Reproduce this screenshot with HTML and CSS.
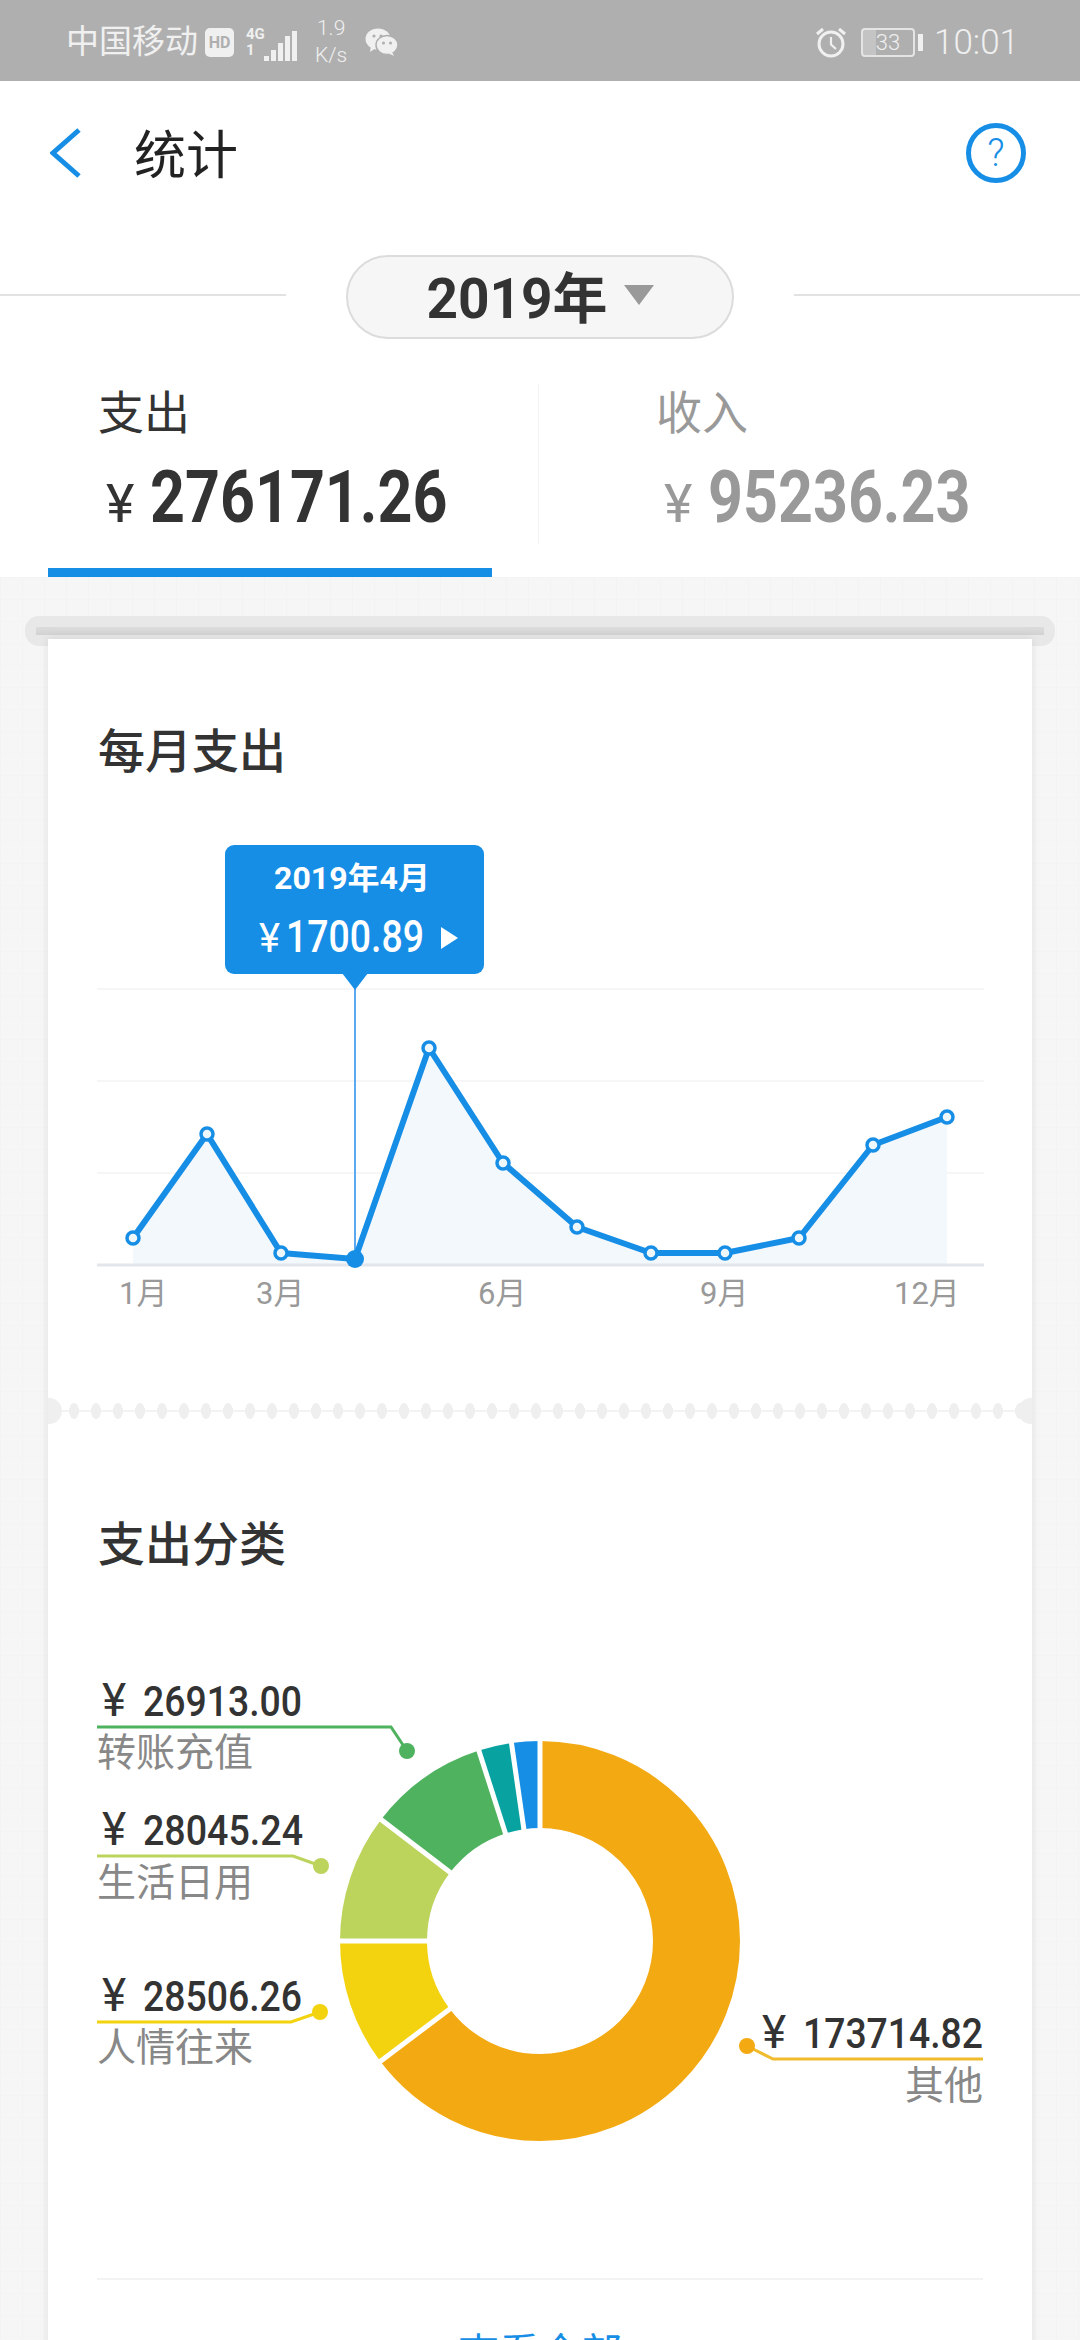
FILE: index.html
```html
<!DOCTYPE html>
<html lang="zh-CN">
<head>
  <meta charset="UTF-8">
  <meta name="viewport" content="width=device-width, initial-scale=1.0">
  <title>统计</title>
  <link rel="stylesheet" href="styles.css">
</head>
<body>

  <!-- Status bar -->
  <div class="status-bar">
    <div class="status-left">
      <span class="carrier">中国移动</span>
      <span class="hd">HD</span>
      <span class="net"><b>4G</b><b>1</b></span>
      <svg class="signal" width="33" height="32" viewBox="0 0 33 32">
        <rect x="0" y="26" width="5" height="5" fill="#f0f0f0"/>
        <rect x="7" y="20" width="5" height="11" fill="#f0f0f0"/>
        <rect x="14" y="13" width="5" height="18" fill="#f0f0f0"/>
        <rect x="21" y="6" width="5" height="25" fill="#f0f0f0"/>
        <rect x="28" y="1" width="5" height="30" fill="#f0f0f0"/>
      </svg>
      <span class="speed"><span>1.9</span><span>K/s</span></span>
      <svg class="wechat" width="33" height="28" viewBox="0 0 33 28">
        <ellipse cx="13" cy="11" rx="12.5" ry="10.5" fill="#f0f0f0"/>
        <path d="M6 18 L5 24 L11 20 Z" fill="#f0f0f0"/>
        <ellipse cx="22" cy="17" rx="11" ry="9.5" fill="#f0f0f0" stroke="#afafaf" stroke-width="1.5"/>
        <path d="M27 24 L29 28 L23 25 Z" fill="#f0f0f0"/>
        <circle cx="9" cy="8" r="1.6" fill="#afafaf"/>
        <circle cx="16" cy="8" r="1.6" fill="#afafaf"/>
        <circle cx="18.5" cy="15" r="1.5" fill="#afafaf"/>
        <circle cx="25.5" cy="15" r="1.5" fill="#afafaf"/>
      </svg>
    </div>
    <div class="status-right">
      <svg class="alarm" width="32" height="31" viewBox="0 0 32 31">
        <circle cx="16" cy="17" r="12" fill="none" stroke="#f0f0f0" stroke-width="3"/>
        <path d="M16 10 V17.5 L21 22" fill="none" stroke="#f0f0f0" stroke-width="2.2"/>
        <path d="M2 7 L8 2 M30 7 L24 2" fill="none" stroke="#f0f0f0" stroke-width="3"/>
      </svg>
      <span class="battery"><span class="battery-body">33</span><span class="battery-nub"></span></span>
      <span class="time">10:01</span>
    </div>
  </div>

  <!-- Title row -->
  <div class="nav">
    <svg class="back" width="32" height="50" viewBox="0 0 32 50">
      <path d="M29 2 L3 25 L29 48" fill="none" stroke="#178ee6" stroke-width="5"/>
    </svg>
    <h1>统计</h1>
    <span class="help">?</span>
  </div>

  <div class="year-row">
    <span class="year-line"></span>
    <div class="year-pill">
      <span class="year-text">2019年</span>
      <span class="caret"></span>
    </div>
    <span class="year-line"></span>
  </div>

  <!-- Expense / income -->
  <div class="tabs">
    <div class="tab active">
      <div class="tab-label">支出</div>
      <div class="tab-amount"><span class="yen">¥</span><span class="num">276171.26</span></div>
    </div>
    <div class="tab-divider"></div>
    <div class="tab income">
      <div class="tab-label">收入</div>
      <div class="tab-amount"><span class="yen">¥</span><span class="num">95236.23</span></div>
    </div>
  </div>

  <div class="board">
    <div class="slot"><div class="slot-inner"></div></div>

    <div class="card">
      <section class="monthly">
        <h2>每月支出</h2>
        <svg class="chart" width="984" height="567" viewBox="48 830 984 567">
          <g class="grid">
            <line x1="97" y1="988" x2="984" y2="988"/>
            <line x1="97" y1="1080" x2="984" y2="1080"/>
            <line x1="97" y1="1172" x2="984" y2="1172"/>
          </g>
          <polygon class="area" points="133,1237 207,1133 281,1252 355,1258 429,1047 503,1162 577,1226 651,1252 725,1252 799,1237 873,1144 947,1116 947,1263 133,1263"/>
          <line class="axis" x1="97" y1="1264" x2="984" y2="1264"/>
          <line class="cursor" x1="355" y1="975" x2="355" y2="1258"/>
          <polyline class="trend" points="133,1237 207,1133 281,1252 355,1258 429,1047 503,1162 577,1226 651,1252 725,1252 799,1237 873,1144 947,1116"/>
          <g class="points">
            <circle cx="133" cy="1237" r="6"/>
            <circle cx="207" cy="1133" r="6"/>
            <circle cx="281" cy="1252" r="6"/>
            <circle cx="429" cy="1047" r="6"/>
            <circle cx="503" cy="1162" r="6"/>
            <circle cx="577" cy="1226" r="6"/>
            <circle cx="651" cy="1252" r="6"/>
            <circle cx="725" cy="1252" r="6"/>
            <circle cx="799" cy="1237" r="6"/>
            <circle cx="873" cy="1144" r="6"/>
            <circle cx="947" cy="1116" r="6"/>
          </g>
          <circle cx="355" cy="1258" r="9" fill="#178ee6"/>
          <g class="months">
            <text x="119" y="1303">1月</text>
            <text x="256" y="1303">3月</text>
            <text x="478" y="1303">6月</text>
            <text x="700" y="1303">9月</text>
            <text x="894" y="1303">12月</text>
          </g>
          <rect x="225" y="844" width="259" height="129" rx="9" fill="#178ee6"/>
          <path d="M342 972 H368 L355 989 Z" fill="#178ee6"/>
          <text class="tip-date" x="274" y="888" textLength="156" lengthAdjust="spacingAndGlyphs">2019年4月</text>
          <text class="tip-yen" x="259" y="951">¥</text>
          <text class="tip-num" x="286" y="951" textLength="138" lengthAdjust="spacingAndGlyphs">1700.89</text>
          <path d="M441 926 L458 937 L441 948 Z" fill="#fff"/>
        </svg>
      </section>

      <div class="perforation"></div>

      <section class="category">
        <h2>支出分类</h2>
        <svg class="chart" width="984" height="617" viewBox="48 1660 984 617">
          <g class="donut" transform="translate(540 1940)">
            <circle r="156.5" stroke="#f3a912" stroke-dasharray="233 360" transform="rotate(-90)" pathLength="360"/>
            <circle r="156.5" stroke="#f3d30f" stroke-dasharray="37 360" transform="rotate(143)" pathLength="360"/>
            <circle r="156.5" stroke="#bcd35c" stroke-dasharray="37.4 360" transform="rotate(180)" pathLength="360"/>
            <circle r="156.5" stroke="#4fb25f" stroke-dasharray="34.8 360" transform="rotate(217.4)" pathLength="360"/>
            <circle r="156.5" stroke="#08a3a0" stroke-dasharray="9.6 360" transform="rotate(252.2)" pathLength="360"/>
            <circle r="156.5" stroke="#178ee6" stroke-dasharray="8.2 360" transform="rotate(261.8)" pathLength="360"/>
            <g class="gaps">
              <line y1="-110" y2="-203"/>
              <line y1="-110" y2="-203" transform="rotate(233)"/>
              <line y1="-110" y2="-203" transform="rotate(270)"/>
              <line y1="-110" y2="-203" transform="rotate(307.4)"/>
              <line y1="-110" y2="-203" transform="rotate(342.2)"/>
              <line y1="-110" y2="-203" transform="rotate(351.8)"/>
            </g>
          </g>

          <text class="pie-yen" x="102" y="1715">¥</text>
          <text class="pie-num" x="143" y="1715" textLength="159" lengthAdjust="spacingAndGlyphs">26913.00</text>
          <polyline class="lead" stroke="#4fb25f" points="97,1726 391,1726 407,1750"/>
          <circle cx="407" cy="1750" r="8" fill="#4fb25f"/>
          <text class="pie-name" x="97" y="1765">转账充值</text>

          <text class="pie-yen" x="102" y="1844">¥</text>
          <text class="pie-num" x="143" y="1844" textLength="160" lengthAdjust="spacingAndGlyphs">28045.24</text>
          <polyline class="lead" stroke="#bcd35c" points="97,1855 293,1855 321,1865"/>
          <circle cx="321" cy="1865" r="8" fill="#bcd35c"/>
          <text class="pie-name" x="97" y="1895">生活日用</text>

          <text class="pie-yen" x="102" y="2010">¥</text>
          <text class="pie-num" x="143" y="2010" textLength="159" lengthAdjust="spacingAndGlyphs">28506.26</text>
          <polyline class="lead" stroke="#f3d30f" points="97,2021 291,2021 320,2011"/>
          <circle cx="320" cy="2011" r="8" fill="#f3d30f"/>
          <text class="pie-name" x="97" y="2060">人情往来</text>

          <text class="pie-yen" x="762" y="2047">¥</text>
          <text class="pie-num" x="803" y="2047" textLength="180" lengthAdjust="spacingAndGlyphs">173714.82</text>
          <polyline class="lead" stroke="#f0bb2c" points="983,2058 773,2058 747,2045"/>
          <circle cx="747" cy="2045" r="8" fill="#f3a912"/>
          <text class="pie-name" x="983" y="2098" text-anchor="end">其他</text>
        </svg>
        <div class="see-all">查看全部</div>
      </section>
    </div>
  </div>

</body>
</html>
```

FILE: styles.css
```css
html, body {
  margin: 0;
  height: 2340px;
  overflow: hidden;
  background-color: #fff;
  font-family: Roboto, "Noto Sans CJK SC", sans-serif;
}
h1, h2 {
  margin: 0;
  font-weight: 400;
}

/* status bar */
.status-bar {
  height: 81px;
  background-color: #afafaf;
  color: #f0f0f0;
  display: flex;
  justify-content: space-between;
  align-items: center;
  padding: 3px 61px 0 66px;
  box-sizing: border-box;
}
.status-left, .status-right {
  display: flex;
  align-items: center;
}
.carrier {
  font-size: 33px;
  line-height: 40px;
}
.hd {
  width: 29px;
  height: 29px;
  margin-left: 7px;
  border-radius: 5px;
  background-color: #f0f0f0;
  color: #afafaf;
  font-size: 16px;
  font-weight: 700;
  line-height: 29px;
  text-align: center;
}
.net {
  display: flex;
  flex-direction: column;
  margin-left: 12px;
  width: 18px;
  font-size: 15px;
  line-height: 16px;
}
.signal {
  margin-top: 8px;
}
.speed {
  display: flex;
  flex-direction: column;
  align-items: center;
  margin-left: 18px;
  font-size: 21px;
  line-height: 27px;
  font-weight: 300;
}
.wechat {
  margin-left: 18px;
}
.alarm {
  margin-right: 14px;
}
.battery {
  display: flex;
  align-items: center;
}
.battery-body {
  width: 50px;
  height: 25px;
  border: 2px solid #e4e4e4;
  border-radius: 4px;
  background: linear-gradient(to right, #c4c4c4 26%, transparent 26%);
  font-size: 22px;
  line-height: 25px;
  text-align: center;
  font-weight: 300;
}
.battery-nub {
  width: 5px;
  height: 17px;
  margin-left: 3px;
  background-color: #f0f0f0;
}
.time {
  margin-left: 11px;
  font-size: 35px;
  font-weight: 300;
}

/* title row */
.nav {
  height: 144px;
  display: flex;
  align-items: center;
  padding: 0 54px 0 50px;
}
.nav h1 {
  margin-left: 52px;
  margin-bottom: 4px;
  font-size: 52px;
  color: #222;
  flex: 1;
}
.help {
  width: 50px;
  height: 50px;
  border: 5px solid #178ee6;
  border-radius: 50%;
  color: #178ee6;
  font-size: 38px;
  font-weight: 300;
  line-height: 50px;
  text-align: center;
}

/* year picker */
.year-row {
  margin-top: 30px;
  display: flex;
  align-items: center;
  gap: 60px;
}
.year-line {
  flex: 1;
  height: 2px;
  margin-bottom: 4px;
  background-color: #e2e2e2;
}
.year-pill {
  box-sizing: border-box;
  width: 388px;
  height: 84px;
  border: 2px solid #dcdcdc;
  border-radius: 42px;
  background-color: #f6f6f6;
  display: flex;
  justify-content: center;
  align-items: center;
  gap: 16px;
  color: #333;
  font-size: 55px;
  font-weight: 700;
}
.year-text {
  margin-bottom: 6px;
}
.caret {
  width: 0;
  height: 0;
  margin-bottom: 4px;
  border-left: 15px solid transparent;
  border-right: 15px solid transparent;
  border-top: 20px solid #999;
}

/* expense / income */
.tabs {
  box-sizing: border-box;
  height: 238px;
  display: flex;
}
.tab {
  box-sizing: border-box;
  padding-top: 48px;
  color: #999;
}
.tab.active {
  flex: none;
  width: 444px;
  margin: 0 46px 0 48px;
  padding-left: 50px;
  border-bottom: 9px solid #178ee6;
  color: #333;
}
.tab.income {
  padding-left: 117px;
}
.tab-divider {
  width: 1px;
  height: 160px;
  margin-top: 45px;
  background-color: #f3f3f3;
}
.tab-label {
  font-size: 46px;
  line-height: 52px;
}
.tab-amount {
  display: flex;
  align-items: baseline;
  margin-top: 18px;
  margin-left: 8px;
  line-height: 80px;
}
.yen {
  flex: none;
  font-size: 54px;
  width: 44px;
}
.num {
  flex: none;
  display: inline-block;
  font-size: 73px;
  font-weight: 700;
  transform: scaleX(0.835);
  transform-origin: left center;
}

/* receipt board */
.board {
  height: 1764px;
  padding-top: 39px;
  box-sizing: border-box;
  background-color: #f6f6f6;
  background-image:
    linear-gradient(to right, #f3f3f3 1px, transparent 1px),
    linear-gradient(to bottom, #f4f4f4 1px, transparent 1px);
  background-size: 22px 22px;
}
.slot {
  height: 30px;
  margin: 0 25px;
  padding-top: 11px;
  box-sizing: border-box;
  border-radius: 14px;
  background-color: #e8e8e8;
}
.slot-inner {
  height: 8px;
  margin: 0 11px;
  background: linear-gradient(#dcdcdc, #d2d2d2);
}
.card {
  margin: -7px 48px 0;
  background-color: #fff;
  box-shadow: 0 0 9px rgba(0, 0, 0, 0.09);
  position: relative;
}
.card h2 {
  margin-left: 50px;
  font-size: 47px;
  font-weight: 500;
  line-height: 47px;
  color: #333;
}
.chart {
  display: block;
}
.monthly {
  padding-top: 89px;
}
.monthly .chart {
  margin-top: 56px;
}
.category {
  padding-top: 97px;
}
.category .chart {
  margin-top: 93px;
}

/* line chart */
.grid line {
  stroke: #f6f6f6;
  stroke-width: 2;
}
.area {
  fill: #f3f8fd;
}
.axis {
  stroke: #e3e6ea;
  stroke-width: 3;
}
.cursor {
  stroke: #5aa8f0;
  stroke-width: 2;
}
.trend {
  fill: none;
  stroke: #178ee6;
  stroke-width: 6;
  stroke-linejoin: round;
}
.points circle {
  fill: #eef7fc;
  stroke: #178ee6;
  stroke-width: 3.5;
}
.months text {
  font-size: 31px;
  fill: #999;
}
.tip-date {
  font-size: 31px;
  font-weight: 700;
  fill: #fff;
}
.tip-yen {
  font-size: 40px;
  fill: #fff;
}
.tip-num {
  font-size: 45px;
  font-weight: 500;
  fill: #fff;
}

/* perforated tear line */
.perforation {
  height: 26px;
  position: relative;
  background:
    radial-gradient(ellipse 5px 8px at center, #efefef 96%, transparent) 15px 0 / 22px 26px repeat-x,
    linear-gradient(#f3f3f3, #f3f3f3) 0 12px / 100% 2px no-repeat;
}
.perforation::before,
.perforation::after {
  content: "";
  position: absolute;
  top: 0;
  width: 14px;
  height: 26px;
  background-color: #efefef;
}
.perforation::before {
  left: 0;
  border-radius: 0 13px 13px 0;
}
.perforation::after {
  right: 0;
  border-radius: 13px 0 0 13px;
}

/* donut chart */
.donut circle {
  fill: none;
  stroke-width: 87;
}
.gaps line {
  stroke: #fff;
  stroke-width: 5;
}
.lead {
  fill: none;
  stroke-width: 3;
}
.pie-yen {
  font-size: 46px;
  fill: #333;
}
.pie-num {
  font-size: 43px;
  font-weight: 500;
  fill: #333;
}
.pie-name {
  font-size: 39px;
  fill: #888;
}
.see-all {
  margin: 0 49px;
  padding-top: 50px;
  border-top: 2px solid #f3f3f3;
  color: #178ee6;
  font-size: 41px;
  line-height: 48px;
  text-align: center;
}
```
